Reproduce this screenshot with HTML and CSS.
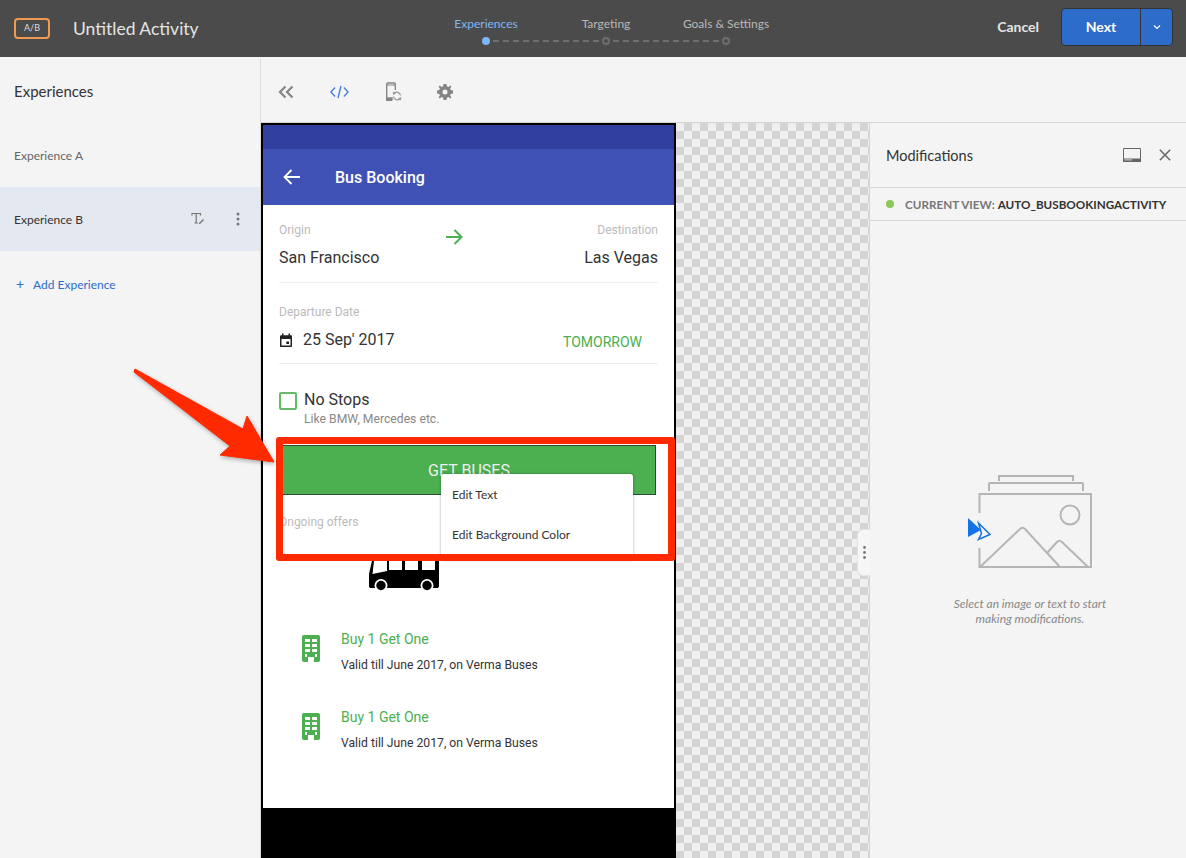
FILE: index.html
```html
<!DOCTYPE html>
<html lang="en">
<head>
  <meta charset="UTF-8" />
  <meta name="viewport" content="width=device-width, initial-scale=1" />
  <title>Untitled Activity</title>
  <link rel="stylesheet" href="styles.css">
</head>
<body>
  <!-- Top bar -->
  <header class="topbar">
    <div class="brand">
      <span class="ab-badge">A/B</span>
      <span class="activity-name">Untitled Activity</span>
    </div>
    <div class="stepper">
      <div class="step-labels">
        <span class="step-label active">Experiences</span>
        <span class="step-label">Targeting</span>
        <span class="step-label">Goals &amp; Settings</span>
      </div>
      <div class="step-track">
        <i class="dot active"></i><i class="dash"></i><i class="dot"></i><i class="dash"></i><i class="dot"></i>
      </div>
    </div>
    <div class="actions">
      <span class="cancel">Cancel</span>
      <div class="next-btn">
        <span class="next-label">Next</span>
        <span class="next-caret">
          <svg width="8" height="6" viewBox="0 0 8 6"><path d="M1 1.500 4 4.500 7 1.500" fill="none" stroke="#fff" stroke-width="1.200"/></svg>
        </span>
      </div>
    </div>
  </header>

  <div class="main">
    <!-- Experiences list -->
    <aside class="sidebar">
      <h2 class="sidebar-title">Experiences</h2>
      <div class="exp-row">Experience A</div>
      <div class="exp-row selected">
        <span class="exp-name">Experience B</span>
        <svg class="exp-icon" width="14" height="14" viewBox="0 0 14 14"><path d="M1 3.500V1.500H9.500V3.500M5.200 1.500V11M3.500 11H7" fill="none" stroke="#777" stroke-width="1.200"/><path d="M8 11 12 7 13 8 9 12H8Z" fill="#777"/></svg>
        <svg class="exp-more" width="4" height="14" viewBox="0 0 4 14"><circle cx="2" cy="2" r="1.500" fill="#777"/><circle cx="2" cy="7" r="1.500" fill="#777"/><circle cx="2" cy="12" r="1.500" fill="#777"/></svg>
      </div>
      <div class="add-exp"><span class="add-plus">+</span>Add Experience</div>
    </aside>

    <div class="workspace">
      <!-- Toolbar -->
      <div class="toolbar">
        <svg class="tool-collapse" width="16" height="14" viewBox="0 0 16 14"><path d="M7.500 1.500 2 7 7.500 12.500M14.500 1.500 9 7 14.500 12.500" fill="none" stroke="#858585" stroke-width="2.200"/></svg>
        <svg class="tool-code" width="19" height="14" viewBox="0 0 19 14"><path d="M5 2.500 1 7 5 11.500M14 2.500 18 7 14 11.500M11 1 8 13" fill="none" stroke="#4a7fd6" stroke-width="1.400"/></svg>
        <svg class="tool-device" width="17" height="20" viewBox="0 0 17 20"><path d="M1.700 18.500V2.200C1.700 1.500 2 1 2.800 1H9.200C10 1 10.300 1.500 10.300 2.200V8M1.700 16H7V18.500" fill="none" stroke="#858585" stroke-width="1.400"/><path d="M1 16H7V19H1ZM1 3.500H11V2.500H1Z" fill="#858585"/><path d="M15.500 13.500A3.900 3.900 0 0 0 8.800 11.300M8.500 14.500A3.900 3.900 0 0 0 15.200 16.700" fill="none" stroke="#999" stroke-width="1.300"/><path d="M7.800 9.500 11 11.500 8 13ZM16.200 18.500 13 16.500 16 15Z" fill="#999"/></svg>
        <svg class="tool-gear" width="16" height="16" viewBox="0 0 16 16"><path d="M6.500 0H9.500L9.900 2.300 11.400 2.900 13.300 1.600 14.400 2.700 13.100 4.600 13.700 6.100 16 6.500V9.500L13.700 9.900 13.100 11.400 14.400 13.300 13.300 14.400 11.400 13.100 9.900 13.700 9.500 16H6.500L6.100 13.700 4.600 13.100 2.700 14.400 1.600 13.300 2.900 11.400 2.300 9.900 0 9.500V6.500L2.300 6.100 2.900 4.600 1.600 2.700 2.700 1.600 4.600 2.900 6.100 2.300ZM8 5.500A2.500 2.500 0 1 0 8 10.500 2.500 2.500 0 1 0 8 5.500Z" fill="#858585" fill-rule="evenodd"/></svg>
      </div>

      <div class="canvas">
        <!-- Phone preview -->
        <div class="device">
          <div class="status-bar"></div>
          <div class="app-bar">
            <svg width="18" height="16" viewBox="0 0 18 16"><path d="M17 8H2M8.500 1 1.500 8 8.500 15" fill="none" stroke="#fff" stroke-width="1.800"/></svg>
            <span class="app-title">Bus Booking</span>
          </div>
          <div class="app-body">
            <div class="route">
              <div class="route-col">
                <span class="field-label">Origin</span>
                <span class="field-value">San Francisco</span>
              </div>
              <svg class="route-arrow" width="18" height="16" viewBox="0 0 18 16"><path d="M1 8H16M9.500 1 16.500 8 9.500 15" fill="none" stroke="#4caf50" stroke-width="2"/></svg>
              <div class="route-col end">
                <span class="field-label">Destination</span>
                <span class="field-value">Las Vegas</span>
              </div>
            </div>
            <div class="date-block">
              <span class="field-label">Departure Date</span>
              <div class="date-row">
                <svg width="14" height="15" viewBox="0 0 14 15"><path d="M1 3.500C1 2.700 1.500 2.300 2.200 2.300H11.800C12.500 2.300 13 2.700 13 3.500V13C13 13.700 12.500 14 11.800 14H2.200C1.500 14 1 13.700 1 13ZM2.500 6V12.500H11.500V6Z" fill="#222" fill-rule="evenodd"/><path d="M3 0.500H4.500V3H3ZM9.500 0.500H11V3H9.500ZM7.300 8.500H10V11H7.300Z" fill="#222"/></svg>
                <span class="field-value date-value">25 Sep' 2017</span>
                <span class="tomorrow">TOMORROW</span>
              </div>
            </div>
            <div class="stops">
              <span class="checkbox"></span>
              <div>
                <div class="stops-title">No Stops</div>
                <div class="stops-sub">Like BMW, Mercedes etc.</div>
              </div>
            </div>
            <div class="get-buses">GET BUSES</div>
            <div class="offers-label">Ongoing offers</div>
            <svg class="bus" width="70" height="38" viewBox="0 0 70 38"><path d="M4 2H68C69.500 2 70 3 70 4V32C70 33.500 69 34 68 34H2C.8 34 0 33.500 0 32V20Z" fill="#000"/><path d="M5.500 3H18V17L3.500 20ZM20 3H33V16H20ZM36 3H49V16H36ZM53 3H66V16H53Z" fill="#fff"/><circle cx="12" cy="31.500" r="6.500" fill="#fff"/><circle cx="12" cy="31.500" r="4.700" fill="#000"/><circle cx="58" cy="31.500" r="6.500" fill="#fff"/><circle cx="58" cy="31.500" r="4.700" fill="#000"/></svg>
            <div class="offer">
              <svg width="18" height="27" viewBox="0 0 18 27"><path d="M2 0H16C17.200 0 18 .8 18 2V25C18 26.200 17.200 27 16 27H12V22H6V27H2C.8 27 0 26.200 0 25V2C0 .8.800 0 2 0ZM3 4V7H8V4ZM10 4V7H15V4ZM3 9V12H8V9ZM10 9V12H15V9ZM3 14V17H8V14ZM10 14V17H15V14ZM3 19V22H5V19ZM13 19V22H15V19Z" fill="#4caf50" fill-rule="evenodd"/></svg>
              <div class="offer-text">
                <div class="offer-title">Buy 1 Get One</div>
                <div class="offer-sub">Valid till June 2017, on Verma Buses</div>
              </div>
            </div>
            <div class="offer">
              <svg width="18" height="27" viewBox="0 0 18 27"><path d="M2 0H16C17.200 0 18 .8 18 2V25C18 26.200 17.200 27 16 27H12V22H6V27H2C.8 27 0 26.200 0 25V2C0 .8.800 0 2 0ZM3 4V7H8V4ZM10 4V7H15V4ZM3 9V12H8V9ZM10 9V12H15V9ZM3 14V17H8V14ZM10 14V17H15V14ZM3 19V22H5V19ZM13 19V22H15V19Z" fill="#4caf50" fill-rule="evenodd"/></svg>
              <div class="offer-text">
                <div class="offer-title">Buy 1 Get One</div>
                <div class="offer-sub">Valid till June 2017, on Verma Buses</div>
              </div>
            </div>
          </div>
          <div class="nav-bar"></div>
        </div>

        <div class="checker"></div>

        <!-- Modifications panel -->
        <aside class="panel">
          <div class="grip"><svg width="3" height="13" viewBox="0 0 3 13"><circle cx="1.500" cy="1.500" r="1.400" fill="#777"/><circle cx="1.500" cy="6.500" r="1.400" fill="#777"/><circle cx="1.500" cy="11.500" r="1.400" fill="#777"/></svg></div>
          <div class="panel-head">
            <span class="panel-title">Modifications</span>
            <svg class="panel-screen" width="18" height="14" viewBox="0 0 18 14"><path d="M.5.500H17.500V13.500H.5Z" fill="none" stroke="#666"/><path d="M0 10.500H18V14H0Z" fill="#666"/><path d="M1.500 11.500H9V12.300H1.500Z" fill="#f4f4f4"/></svg>
            <svg class="panel-close" width="12" height="12" viewBox="0 0 12 12"><path d="M.8.800 11.200 11.200M11.200.800.800 11.200" stroke="#666" stroke-width="1.500"/></svg>
          </div>
          <div class="current-view">
            <i class="view-dot"></i>
            <span class="view-key">CURRENT VIEW:</span>
            <span class="view-name">AUTO_BUSBOOKINGACTIVITY</span>
          </div>
          <div class="empty-state">
            <svg class="empty-art" width="128" height="97" viewBox="0 0 128 97">
              <g fill="none" stroke="#b5b5b5" stroke-width="2">
                <path d="M33 8V3H107V8M23 18V11C23 10.500 23.500 10 24 10H116C116.500 10 117 10.500 117 11V18"/>
                <path d="M13.500 40V21H125V94H13.500V75"/>
                <circle cx="104" cy="42" r="9.500"/>
                <path d="M14 94 54 56C55.500 54.500 57.500 54.500 59 56L94 94M81 80 91 69C92.500 67.500 94.500 67.500 96 69L122 94"/>
              </g>
              <path d="M2 45 15 57 2 64Z" fill="#1473e6"/>
              <path d="M12.500 50 24 61.500 12.500 66.500 15.500 60.500Z" fill="none" stroke="#1473e6" stroke-width="1.500"/>
            </svg>
            <p class="empty-text">Select an image or text to start<br>making modifications.</p>
          </div>
        </aside>
      </div>
    </div>
  </div>

  <!-- Annotation and context menu, laid over the page -->
  <div class="ctx-menu">
    <div class="ctx-item">Edit Text</div>
    <div class="ctx-item">Edit Background Color</div>
  </div>
  <div class="red-box"></div>
  <svg class="red-arrow" width="160" height="110" viewBox="0 0 160 110">
    <path d="M2 3 110 63 114 50 141 96 87 89 97 80 1 6Z" fill="#ff2a00" stroke="#ff2a00" stroke-linejoin="round"/>
  </svg>
</body>
</html>
```

FILE: styles.css
```css
* {
  box-sizing: border-box;
}
body {
  margin: 0;
  width: 1186px;
  height: 858px;
  overflow: hidden;
  position: relative;
  font-family: Lato, "Open Sans", sans-serif;
  background: #f4f4f4;
  color: #333;
}

/* top bar */
.topbar {
  height: 57px;
  background: #4b4b4b;
  display: flex;
  align-items: center;
}
.brand {
  width: 426px;
  padding-left: 14px;
  display: flex;
  align-items: center;
}
.ab-badge {
  width: 36px;
  height: 21px;
  border: 2px solid #f0994f;
  border-radius: 4px;
  color: #ddd;
  font-size: 9px;
  line-height: 16px;
  text-align: center;
}
.activity-name {
  margin-left: 23px;
  color: #e4e4e4;
  font-size: 17.500px;
  font-weight: 400;
}
.stepper {
  width: 360px;
  align-self: flex-start;
  padding-top: 16px;
}
.step-labels {
  display: flex;
}
.step-label {
  width: 120px;
  text-align: center;
  color: #b9b9b9;
  font-size: 12px;
  line-height: 16px;
}
.step-label.active {
  color: #7fb6f5;
}
.step-track {
  margin-top: 5px;
  display: flex;
  align-items: center;
  justify-content: center;
  gap: 3px;
}
.dot {
  width: 8px;
  height: 8px;
  border-radius: 50%;
  border: 2px solid #6e6e6e;
}
.dot.active {
  background: #7fb6f5;
  border-color: #7fb6f5;
}
.dash {
  width: 106px;
  height: 0;
  border-top: 2px dashed #6e6e6e;
}
.actions {
  margin-left: auto;
  margin-bottom: 4px;
  padding-right: 13px;
  display: flex;
  align-items: center;
}
.cancel {
  color: #e4e4e4;
  font-size: 14px;
  font-weight: 700;
  margin-right: 22px;
}
.next-btn {
  width: 112px;
  height: 38px;
  background: #2d6cc9;
  border: 1px solid #333;
  border-radius: 4px;
  display: flex;
  color: #fff;
  font-size: 14px;
  font-weight: 700;
}
.next-label {
  width: 79px;
  line-height: 36px;
  text-align: center;
  border-right: 1px solid #333;
}
.next-caret {
  flex: 1;
  display: flex;
  align-items: center;
  justify-content: center;
}

.main {
  display: flex;
  height: 801px;
}

/* sidebar */
.sidebar {
  width: 261px;
  border-right: 1px solid #dcdcdc;
  margin-top: 2px;
  flex: none;
}
.sidebar-title {
  margin: 0;
  height: 64px;
  padding-left: 14px;
  line-height: 64px;
  font-size: 15px;
  font-weight: 400;
  color: #333;
}
.exp-row {
  height: 64px;
  padding: 0 20px 0 14px;
  display: flex;
  align-items: center;
  font-size: 12px;
  color: #666;
}
.exp-row.selected {
  background: #e4e8f0;
  color: #333;
}
.exp-name {
  flex: 1;
}
.exp-more {
  margin-left: 31px;
}
.add-exp {
  margin-top: 24px;
  padding-left: 16px;
  font-size: 12px;
  line-height: 18px;
  color: #2d6cc9;
}
.add-plus {
  display: inline-block;
  width: 17px;
  font-size: 14px;
}

/* toolbar */
.workspace {
  flex: 1;
  display: flex;
  flex-direction: column;
}
.toolbar {
  height: 66px;
  border-bottom: 1px solid #d5d5d5;
  display: flex;
  align-items: center;
  padding: 4px 0 0 17px;
}
.tool-code {
  margin-left: 36px;
}
.tool-device {
  margin-left: 36px;
}
.tool-gear {
  margin-left: 35px;
}

.canvas {
  flex: 1;
  display: flex;
  min-height: 0;
}

/* device */
.device {
  width: 415px;
  flex: none;
  background: #000;
  padding: 2px 2px 0;
  display: flex;
  flex-direction: column;
  font-family: Roboto, sans-serif;
}
.status-bar {
  height: 24px;
  background: #303f9f;
}
.app-bar {
  height: 56px;
  background: #3f51b5;
  display: flex;
  align-items: center;
  padding-left: 20px;
}
.app-title {
  margin-left: 34px;
  color: #fff;
  font-size: 16px;
  font-weight: 500;
}
.app-body {
  height: 603px;
  background: #fff;
  padding: 0 16px;
}
.route {
  height: 78px;
  border-bottom: 1px solid #eee;
  display: flex;
  justify-content: space-between;
  padding-top: 17px;
}
.route-col {
  display: flex;
  flex-direction: column;
}
.route-col.end {
  align-items: flex-end;
}
.route-arrow {
  margin: 7px 56px 0 0;
}
.field-label {
  font-size: 12px;
  line-height: 16px;
  color: #bbb;
}
.field-value {
  margin-top: 10px;
  font-size: 16px;
  line-height: 20px;
  color: #333;
}
.date-block {
  height: 81px;
  border-bottom: 1px solid #eee;
  padding-top: 18px;
}
.date-row {
  display: flex;
  align-items: center;
  margin-top: 10px;
}
.date-value {
  margin: 0 0 0 10px;
}
.tomorrow {
  margin-left: auto;
  margin-right: 16px;
  padding-top: 4px;
  font-size: 14px;
  color: #4caf50;
}
.stops {
  height: 73px;
  padding-top: 26px;
  display: flex;
  gap: 7px;
}
.checkbox {
  width: 18px;
  height: 18px;
  margin-top: 2px;
  border: 2px solid #66bb6a;
  border-radius: 2px;
}
.stops-title {
  font-size: 16px;
  line-height: 20px;
  color: #333;
}
.stops-sub {
  font-size: 12.200px;
  line-height: 16px;
  margin-top: 1px;
  color: #888;
}
.get-buses {
  width: 374px;
  height: 50px;
  margin: 8px 0 0 3px;
  background: #4caf50;
  border: 1px solid #2f4a32;
  color: #eee;
  font-size: 16px;
  line-height: 49px;
  text-align: center;
}
.offers-label {
  margin-top: 19px;
  font-size: 12px;
  line-height: 16px;
  color: #bbb;
}
.bus {
  display: block;
  margin: 24px 0 0 90px;
}
.offer {
  display: flex;
  height: 78px;
  padding-left: 23px;
}
.offer svg {
  margin-top: 43px;
}
.offer-text {
  margin-left: 21px;
  padding-top: 39px;
}
.offer-title {
  font-size: 14px;
  line-height: 16px;
  color: #4caf50;
}
.offer-sub {
  margin-top: 10px;
  font-size: 12.200px;
  line-height: 16px;
  color: #333;
}
.nav-bar {
  flex: 1;
  background: #000;
}

.checker {
  width: 193px;
  flex: none;
  background: repeating-conic-gradient(#d4d4d4 0 25%, #efefef 0 50%) 0 0 / 16px 16px;
}

/* modifications panel */
.panel {
  flex: 1;
  position: relative;
  display: flex;
  flex-direction: column;
  border-left: 1px solid #d5d5d5;
}
.grip {
  position: absolute;
  left: -13px;
  top: 406px;
  width: 13px;
  height: 47px;
  background: #f6f6f6;
  border: 1px solid #e4e4e4;
  border-right: 0;
  border-radius: 6px 0 0 6px;
  display: flex;
  align-items: center;
  justify-content: center;
}
.panel-head {
  height: 65px;
  border-bottom: 1px solid #d5d5d5;
  display: flex;
  align-items: center;
  padding: 0 15px 0 16px;
}
.panel-title {
  flex: 1;
  font-size: 14.500px;
  color: #333;
}
.panel-close {
  margin-left: 18px;
}
.current-view {
  height: 33px;
  border-bottom: 1px solid #d5d5d5;
  display: flex;
  align-items: center;
  padding-left: 16px;
  font-size: 11.700px;
  font-weight: 700;
}
.view-dot {
  width: 8px;
  height: 8px;
  border-radius: 50%;
  background: #8bc85a;
  margin-right: 11px;
}
.view-key {
  color: #777;
  margin-right: 3px;
}
.view-name {
  color: #333;
}
.empty-state {
  text-align: center;
  padding-top: 252px;
}
.empty-art {
  display: block;
  margin-left: 96px;
}
.empty-text {
  margin: 26px 0 0 4px;
  font-size: 12px;
  line-height: 15px;
  font-style: italic;
  color: #888;
}

/* overlays */
.ctx-menu {
  position: absolute;
  left: 441px;
  top: 474px;
  width: 192px;
  height: 86px;
  background: #fff;
  border-radius: 3px;
  box-shadow: 0 0 3px rgba(0, 0, 0, 0.35);
  padding-top: 1px;
}
.ctx-item {
  height: 40px;
  line-height: 40px;
  padding-left: 11px;
  font-size: 12px;
  color: #333;
}
.red-box {
  position: absolute;
  left: 276px;
  top: 437px;
  width: 399px;
  height: 124px;
  border: 7px solid #ff2a00;
  border-radius: 3px;
}
.red-arrow {
  position: absolute;
  left: 133px;
  top: 366px;
  filter: drop-shadow(1px 2px 2px rgba(0, 0, 0, 0.3));
}
```
